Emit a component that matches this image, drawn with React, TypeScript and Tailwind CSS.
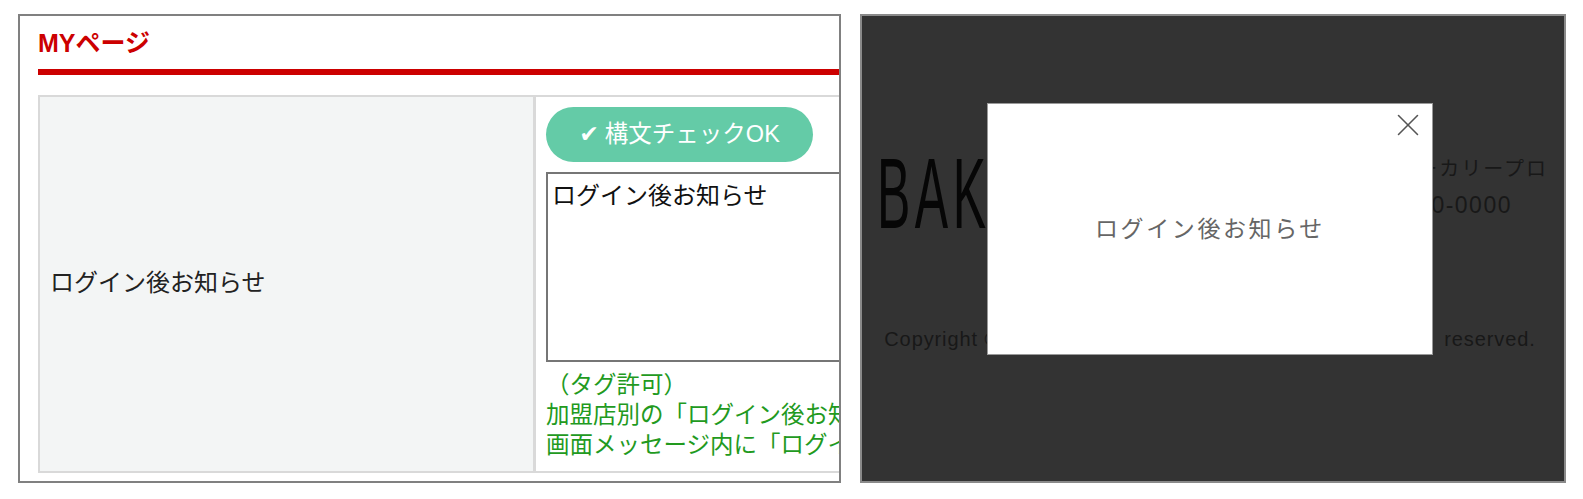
import { X } from "lucide-react";

const JP = "font-['Liberation_Sans','Noto_Sans_CJK_JP',sans-serif]";

function MyPagePanel() {
  return (
    <section className={`h-[469px] w-[823px] shrink-0 overflow-hidden border-2 border-[#808080] bg-white pl-[18px] ${JP}`}>
      <h2 className="mt-[12px] h-[41px] text-[25px] leading-[30px] font-bold text-[#cc0000]">MYページ</h2>
      <div className="h-[6px] w-[900px] bg-[#cc0000]" />
      <div className="mt-[20px] flex h-[378px] w-[900px] border-2 border-[#d9d9d9]">
        <div className="flex w-[493px] shrink-0 items-center bg-[#f3f5f5] pb-[2px] pl-[10px] text-[24px] text-[#222]">
          ログイン後お知らせ
        </div>
        <div className="flex-1 border-l-[3px] border-[#d9d9d9] pt-[10px] pl-[10px]">
          <div className="flex h-[55px] w-[267px] items-center justify-center gap-[6px] rounded-full bg-[#64cba7] text-[23.5px] text-white">
            <span className="font-['DejaVu_Sans']">✔</span>
            <span>構文チェックOK</span>
          </div>
          <textarea
            readOnly
            defaultValue="ログイン後お知らせ"
            className="mt-[10px] block h-[190px] w-[340px] resize-none border-2 border-[#767676] px-[4px] py-[4px] text-[24px] leading-[36px] text-[#111] outline-none"
          />
          <div className="mt-[8px] text-[23.5px] leading-[30px] whitespace-nowrap text-[#229a1e]">
            <p>（タグ許可）</p>
            <p>加盟店別の「ログイン後お知</p>
            <p>画面メッセージ内に「ログイ</p>
          </div>
        </div>
      </div>
    </section>
  );
}

function ModalPanel() {
  return (
    <section className={`relative h-[469px] w-[706px] shrink-0 overflow-hidden border-2 border-[#8a8a8a] bg-[#333333] ${JP}`}>
      <div className="flex items-start justify-between pt-[127px] pr-[16px] pl-[15px]">
        <div className="h-[100px] w-[200px] origin-left scale-x-[0.5] text-[100px] leading-[100px] tracking-[9px] text-[#060606]">BAKERY</div>
        <div className="-mt-[1px] pt-[9px] text-right text-[#181818]">
          <p className="text-[20px] leading-[36px] tracking-[2px]">ベーカリープロ</p>
          <p className="pr-[36px] text-[23px] leading-[36px] tracking-[1.5px]">000-000-0000</p>
        </div>
      </div>
      <p className="mt-[82px] pr-[6px] text-center text-[20px] leading-[28px] tracking-[0.9px] whitespace-nowrap text-[#181818]">
        Copyright © 2020-2021 BAKERY PRO Co.,Ltd. All rights <span className="ml-[8px]">reserved.</span>
      </p>

      {/* popup over the dimmed page */}
      <div className="absolute top-[87px] left-[125px] flex h-[252px] w-[446px] items-center justify-center border border-[#999] bg-white">
        <p className="text-[23px] tracking-[2.6px] text-[#666]">ログイン後お知らせ</p>
        <X className="absolute top-[2px] right-[5px] h-[38px] w-[38px] text-[#555]" strokeWidth={1} />
      </div>
    </section>
  );
}

export default function App() {
  return (
    <div className="flex h-[499px] w-[1583px] gap-[19px] overflow-hidden bg-white pt-[14px] pl-[18px]">
      <MyPagePanel />
      <ModalPanel />
    </div>
  );
}
